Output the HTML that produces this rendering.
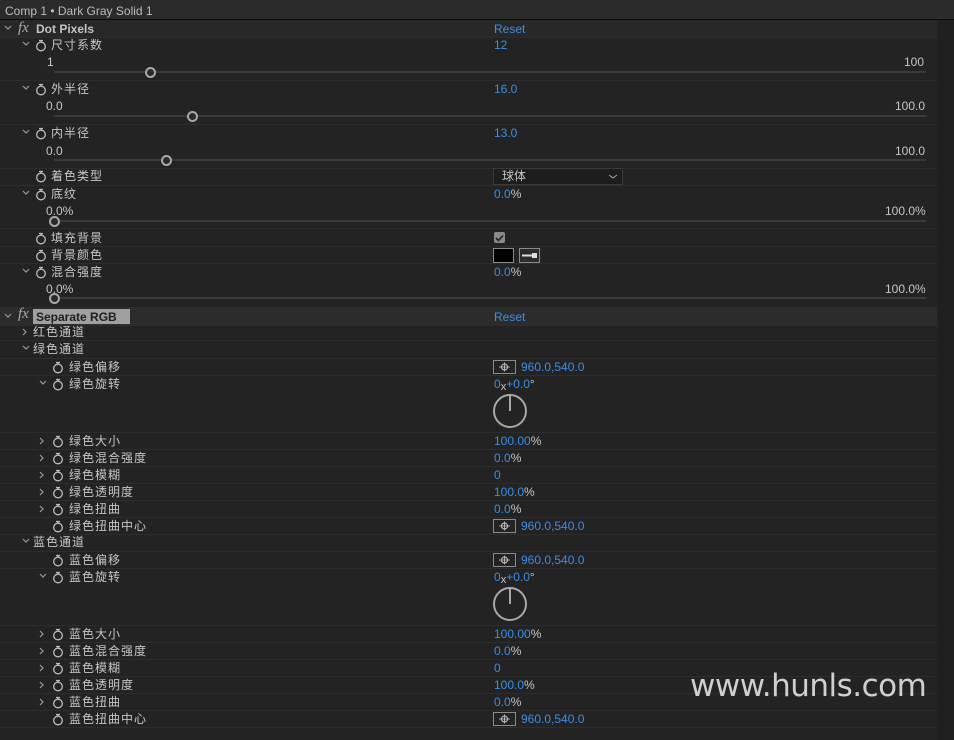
<!DOCTYPE html>
<html><head><meta charset="utf-8"><style>
body{margin:0;width:954px;height:740px;background:#232323;overflow:hidden;font-family:"Liberation Sans","Noto Sans CJK SC",sans-serif;font-size:12px;color:#c6c6c6;position:relative}
.a{position:absolute;white-space:nowrap;line-height:14px}
.ln{position:absolute;left:0;width:937px;height:1px;background:#2d2d2d}
.b{color:#3b8ee6}
.cj{letter-spacing:1px}
.tr{position:absolute;height:2px;background:#3a3a3a;left:54px;width:872px}
.kn{position:absolute;width:7px;height:7px;border:2px solid #a8a8a8;border-radius:50%;background:#2a2a2a}
svg{position:absolute}
</style></head><body>
<div style="position:absolute;left:0;top:0;width:954px;height:19px;background:#2b2b2b;border-bottom:1px solid #0c0c0c"></div>
<div class="a" style="left:5px;top:4px;color:#bdbdbd">Comp 1 • Dark Gray Solid 1</div>
<div style="position:absolute;left:938px;top:20px;width:16px;height:720px;background:#1f1f1f"></div>
<div style="position:absolute;left:0;top:20px;width:937px;height:17px;background:#282828"></div>
<div style="position:absolute;left:0;top:308px;width:937px;height:17px;background:#2c2c2c"></div>
<div style="position:absolute;left:33px;top:309px;width:97px;height:15px;background:#a0a0a0"></div>

<svg width="954" height="740" style="left:0;top:0">
<g fill="none" stroke="#9a9a9a" stroke-width="1.2">
<!-- chevrons down -->
<path d="M5 26l3 3 3-3M23 42l3 3 3-3M23 86l3 3 3-3M23 130l3 3 3-3M23 191l3 3 3-3M23 269l3 3 3-3M5 314l3 3 3-3M23 346l3 3 3-3M40 381l3 3 3-3M40 574l3 3 3-3M23 539l3 3 3-3"/>
<!-- chevrons right -->
<path d="M23 329l3 3-3 3M40 438l3 3-3 3M40 455l3 3-3 3M40 472l3 3-3 3M40 489l3 3-3 3M40 506l3 3-3 3M40 631l3 3-3 3M40 648l3 3-3 3M40 665l3 3-3 3M40 682l3 3-3 3M40 699l3 3-3 3"/>
</g>
<g fill="none" stroke="#bcbcbc" stroke-width="1.3">
<circle cx="41" cy="46.5" r="4.3"/><path d="M39 40.5h4M41 40.5v1.5"/>
<circle cx="41" cy="90.5" r="4.3"/><path d="M39 84.5h4M41 84.5v1.5"/>
<circle cx="41" cy="134.5" r="4.3"/><path d="M39 128.5h4M41 128.5v1.5"/>
<circle cx="41" cy="177.5" r="4.3"/><path d="M39 171.5h4M41 171.5v1.5"/>
<circle cx="41" cy="195.5" r="4.3"/><path d="M39 189.5h4M41 189.5v1.5"/>
<circle cx="41" cy="239.5" r="4.3"/><path d="M39 233.5h4M41 233.5v1.5"/>
<circle cx="41" cy="256.5" r="4.3"/><path d="M39 250.5h4M41 250.5v1.5"/>
<circle cx="41" cy="273.5" r="4.3"/><path d="M39 267.5h4M41 267.5v1.5"/>
<circle cx="58" cy="368.5" r="4.3"/><path d="M56 362.5h4M58 362.5v1.5"/>
<circle cx="58" cy="385.5" r="4.3"/><path d="M56 379.5h4M58 379.5v1.5"/>
<circle cx="58" cy="442.5" r="4.3"/><path d="M56 436.5h4M58 436.5v1.5"/>
<circle cx="58" cy="459.5" r="4.3"/><path d="M56 453.5h4M58 453.5v1.5"/>
<circle cx="58" cy="476.5" r="4.3"/><path d="M56 470.5h4M58 470.5v1.5"/>
<circle cx="58" cy="493.5" r="4.3"/><path d="M56 487.5h4M58 487.5v1.5"/>
<circle cx="58" cy="510.5" r="4.3"/><path d="M56 504.5h4M58 504.5v1.5"/>
<circle cx="58" cy="527.5" r="4.3"/><path d="M56 521.5h4M58 521.5v1.5"/>
<circle cx="58" cy="561.5" r="4.3"/><path d="M56 555.5h4M58 555.5v1.5"/>
<circle cx="58" cy="578.5" r="4.3"/><path d="M56 572.5h4M58 572.5v1.5"/>
<circle cx="58" cy="635.5" r="4.3"/><path d="M56 629.5h4M58 629.5v1.5"/>
<circle cx="58" cy="652.5" r="4.3"/><path d="M56 646.5h4M58 646.5v1.5"/>
<circle cx="58" cy="669.5" r="4.3"/><path d="M56 663.5h4M58 663.5v1.5"/>
<circle cx="58" cy="686.5" r="4.3"/><path d="M56 680.5h4M58 680.5v1.5"/>
<circle cx="58" cy="703.5" r="4.3"/><path d="M56 697.5h4M58 697.5v1.5"/>
<circle cx="58" cy="720.5" r="4.3"/><path d="M56 714.5h4M58 714.5v1.5"/>
</g>
<g fill="none" stroke="#a8a8a8" stroke-width="2">
<circle cx="510" cy="411" r="16"/><path d="M510 411v-15"/>
<circle cx="510" cy="604" r="16"/><path d="M510 604v-15"/>
</g>
</svg>

<div class="a" style="left:18px;top:21px;font-family:'Liberation Serif',serif;font-style:italic;font-size:15px;color:#aaa">fx</div>
<div class="a" style="left:36px;top:22px;font-weight:bold;color:#c4c4c4">Dot Pixels</div>
<div class="a b" style="left:494px;top:22px">Reset</div>
<div class="ln" style="top:37px"></div>

<div class="a cj" style="left:51px;top:38px">尺寸系数</div><div class="a b" style="left:494px;top:38px">12</div>
<div class="a" style="left:47px;top:55px">1</div><div class="a" style="left:904px;top:55px">100</div>
<div class="tr" style="top:71px"></div><div class="kn" style="left:145px;top:67px"></div>
<div class="ln" style="top:80px"></div>

<div class="a cj" style="left:51px;top:82px">外半径</div><div class="a b" style="left:494px;top:82px">16.0</div>
<div class="a" style="left:46px;top:99px">0.0</div><div class="a" style="left:895px;top:99px">100.0</div>
<div class="tr" style="top:115px"></div><div class="kn" style="left:187px;top:111px"></div>
<div class="ln" style="top:124px"></div>

<div class="a cj" style="left:51px;top:126px">内半径</div><div class="a b" style="left:494px;top:126px">13.0</div>
<div class="a" style="left:46px;top:144px">0.0</div><div class="a" style="left:895px;top:144px">100.0</div>
<div class="tr" style="top:159px"></div><div class="kn" style="left:161px;top:155px"></div>
<div class="ln" style="top:168px"></div>

<div class="a cj" style="left:51px;top:169px">着色类型</div>
<div style="position:absolute;left:493px;top:168px;width:128px;height:15px;background:#1d1d1d;border:1px solid #3a3a3a"></div>
<div class="a" style="left:502px;top:169px">球体</div>
<svg width="10" height="8" style="left:608px;top:173px"><path d="M1 2l4 3 4-3" fill="none" stroke="#aaa"/></svg>
<div class="ln" style="top:185px"></div>

<div class="a cj" style="left:51px;top:187px">底纹</div><div class="a" style="left:494px;top:187px"><span class="b">0.0</span>%</div>
<div class="a" style="left:46px;top:204px">0.0%</div><div class="a" style="left:885px;top:204px">100.0%</div>
<div class="tr" style="top:220px"></div><div class="kn" style="left:49px;top:216px"></div>
<div class="ln" style="top:228px"></div>

<div class="a cj" style="left:51px;top:231px">填充背景</div>
<div style="position:absolute;left:494px;top:232px;width:11px;height:11px;background:#8a8a8a;border-radius:2px"></div>
<svg width="11" height="11" style="left:494px;top:232px"><path d="M2 6l2.5 2.5 4.5-5" fill="none" stroke="#222" stroke-width="1.6"/></svg>
<div class="ln" style="top:246px"></div>

<div class="a cj" style="left:51px;top:248px">背景颜色</div>
<div style="position:absolute;left:493px;top:248px;width:19px;height:13px;background:#000;border:1px solid #8a8a8a"></div>
<div style="position:absolute;left:519px;top:248px;width:19px;height:13px;background:#2a2a2a;border:1px solid #8a8a8a"></div>
<svg width="19" height="13" style="left:520px;top:249px"><path d="M2 6.5h10" stroke="#ddd" stroke-width="2"/><rect x="12" y="4" width="5" height="5" fill="#ddd"/></svg>
<div class="ln" style="top:263px"></div>

<div class="a cj" style="left:51px;top:265px">混合强度</div><div class="a" style="left:494px;top:265px"><span class="b">0.0</span>%</div>
<div class="a" style="left:46px;top:282px">0.0%</div><div class="a" style="left:885px;top:282px">100.0%</div>
<div class="tr" style="top:297px"></div><div class="kn" style="left:49px;top:293px"></div>
<div class="ln" style="top:307px"></div>

<div class="a" style="left:18px;top:307px;font-family:'Liberation Serif',serif;font-style:italic;font-size:15px;color:#aaa">fx</div>
<div class="a" style="left:36px;top:310px;font-weight:bold;color:#1e1e1e">Separate RGB</div>
<div class="a b" style="left:494px;top:310px">Reset</div>
<div class="ln" style="top:325px"></div>

<div class="a cj" style="left:33px;top:325px">红色通道</div><div class="ln" style="top:340px"></div>
<div class="a cj" style="left:33px;top:342px">绿色通道</div><div class="ln" style="top:358px"></div>
<div class="a cj" style="left:69px;top:360px">绿色偏移</div>
<div style="position:absolute;left:493px;top:360px;width:21px;height:12px;border:1px solid #8a8a8a"></div>
<svg width="21" height="12" style="left:494px;top:361px"><circle cx="10.5" cy="6" r="3" fill="none" stroke="#ccc"/><path d="M5 6h11M10.5 1.5v9" stroke="#ccc" stroke-width=".8"/></svg>
<div class="a b" style="left:521px;top:360px">960.0,540.0</div>
<div class="ln" style="top:375px"></div>
<div class="a cj" style="left:69px;top:377px">绿色旋转</div>
<div class="a" style="left:494px;top:377px"><span class="b">0</span><span style="font-size:11px;vertical-align:-2px">x</span><span class="b">+0.0</span>°</div>
<div class="ln" style="top:432px"></div>
<div class="a cj" style="left:69px;top:434px">绿色大小</div><div class="a" style="left:494px;top:434px"><span class="b">100.00</span>%</div><div class="ln" style="top:449px"></div>
<div class="a cj" style="left:69px;top:451px">绿色混合强度</div><div class="a" style="left:494px;top:451px"><span class="b">0.0</span>%</div><div class="ln" style="top:466px"></div>
<div class="a cj" style="left:69px;top:468px">绿色模糊</div><div class="a b" style="left:494px;top:468px">0</div><div class="ln" style="top:483px"></div>
<div class="a cj" style="left:69px;top:485px">绿色透明度</div><div class="a" style="left:494px;top:485px"><span class="b">100.0</span>%</div><div class="ln" style="top:500px"></div>
<div class="a cj" style="left:69px;top:502px">绿色扭曲</div><div class="a" style="left:494px;top:502px"><span class="b">0.0</span>%</div><div class="ln" style="top:517px"></div>
<div class="a cj" style="left:69px;top:519px">绿色扭曲中心</div>
<div style="position:absolute;left:493px;top:519px;width:21px;height:12px;border:1px solid #8a8a8a"></div>
<svg width="21" height="12" style="left:494px;top:520px"><circle cx="10.5" cy="6" r="3" fill="none" stroke="#ccc"/><path d="M5 6h11M10.5 1.5v9" stroke="#ccc" stroke-width=".8"/></svg>
<div class="a b" style="left:521px;top:519px">960.0,540.0</div><div class="ln" style="top:534px"></div>

<div class="a cj" style="left:33px;top:535px">蓝色通道</div><div class="ln" style="top:551px"></div>
<div class="a cj" style="left:69px;top:553px">蓝色偏移</div>
<div style="position:absolute;left:493px;top:553px;width:21px;height:12px;border:1px solid #8a8a8a"></div>
<svg width="21" height="12" style="left:494px;top:554px"><circle cx="10.5" cy="6" r="3" fill="none" stroke="#ccc"/><path d="M5 6h11M10.5 1.5v9" stroke="#ccc" stroke-width=".8"/></svg>
<div class="a b" style="left:521px;top:553px">960.0,540.0</div>
<div class="ln" style="top:568px"></div>
<div class="a cj" style="left:69px;top:570px">蓝色旋转</div>
<div class="a" style="left:494px;top:570px"><span class="b">0</span><span style="font-size:11px;vertical-align:-2px">x</span><span class="b">+0.0</span>°</div>
<div class="ln" style="top:625px"></div>
<div class="a cj" style="left:69px;top:627px">蓝色大小</div><div class="a" style="left:494px;top:627px"><span class="b">100.00</span>%</div><div class="ln" style="top:642px"></div>
<div class="a cj" style="left:69px;top:644px">蓝色混合强度</div><div class="a" style="left:494px;top:644px"><span class="b">0.0</span>%</div><div class="ln" style="top:659px"></div>
<div class="a cj" style="left:69px;top:661px">蓝色模糊</div><div class="a b" style="left:494px;top:661px">0</div><div class="ln" style="top:676px"></div>
<div class="a cj" style="left:69px;top:678px">蓝色透明度</div><div class="a" style="left:494px;top:678px"><span class="b">100.0</span>%</div><div class="ln" style="top:693px"></div>
<div class="a cj" style="left:69px;top:695px">蓝色扭曲</div><div class="a" style="left:494px;top:695px"><span class="b">0.0</span>%</div><div class="ln" style="top:710px"></div>
<div class="a cj" style="left:69px;top:712px">蓝色扭曲中心</div>
<div style="position:absolute;left:493px;top:712px;width:21px;height:12px;border:1px solid #8a8a8a"></div>
<svg width="21" height="12" style="left:494px;top:713px"><circle cx="10.5" cy="6" r="3" fill="none" stroke="#ccc"/><path d="M5 6h11M10.5 1.5v9" stroke="#ccc" stroke-width=".8"/></svg>
<div class="a b" style="left:521px;top:712px">960.0,540.0</div><div class="ln" style="top:727px"></div>

<div class="a" style="left:690px;top:668px;font-size:31px;line-height:36px;color:#cfcfcf;font-family:'DejaVu Sans',sans-serif;letter-spacing:-0.5px">www.hunls.com</div>
</body></html>
